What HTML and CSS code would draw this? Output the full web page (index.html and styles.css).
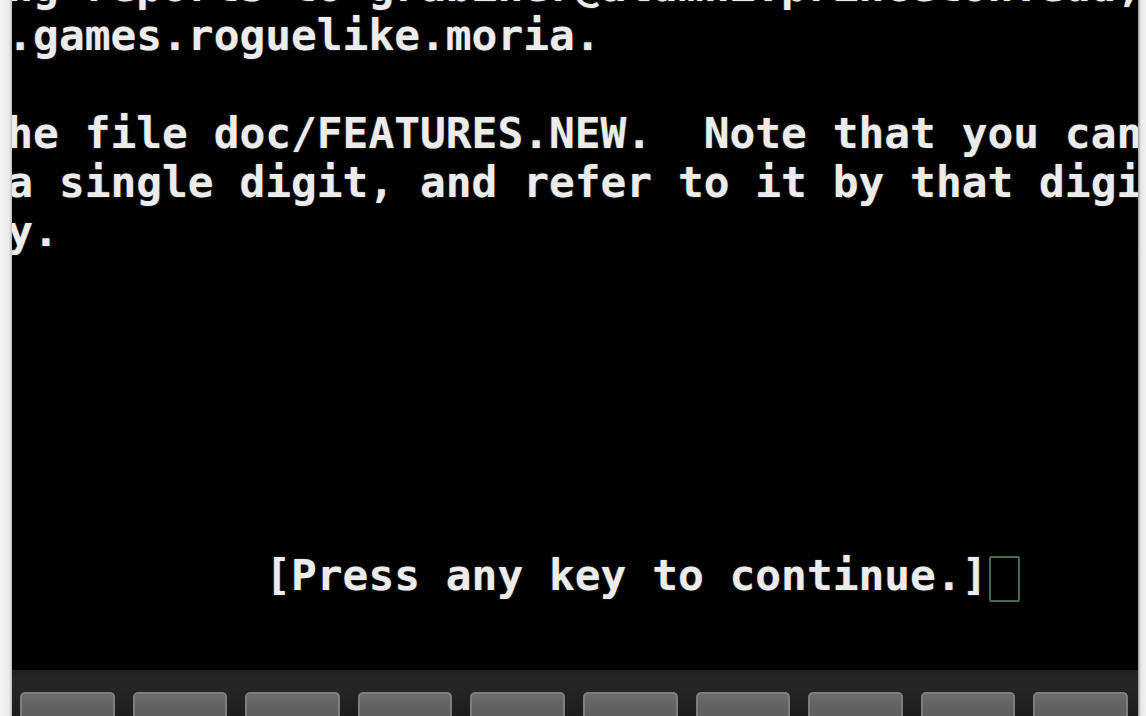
FILE: index.html
```
<!DOCTYPE html>
<html lang="en">
<head>
  <meta charset="UTF-8" />
  <title>Moria</title>
  <link rel="stylesheet" href="styles.css">
</head>
<body>
  <div class="bezel bezel-left"></div>

  <div class="device">
    <div class="terminal">
<pre class="screen">ing reports to grabiner@alumni.princeton.edu, or
c.games.roguelike.moria.

the file doc/FEATURES.NEW.  Note that you can
 a single digit, and refer to it by that digit
ly.






           [Press any key to continue.]<span class="cursor"></span></pre>
    </div>

    <div class="keybar">
      <div class="key"></div>
      <div class="key"></div>
      <div class="key"></div>
      <div class="key"></div>
      <div class="key"></div>
      <div class="key"></div>
      <div class="key"></div>
      <div class="key"></div>
      <div class="key"></div>
      <div class="key"></div>
    </div>
  </div>

  <div class="bezel bezel-right"></div>
</body>
</html>
```

FILE: styles.css
```
* {
  box-sizing: border-box;
  margin: 0;
  padding: 0;
}

html, body {
  height: 100%;
  overflow: hidden;
}

body {
  display: flex;
  background-color: #000;
}

.bezel {
  height: 100%;
}

.bezel-left {
  width: 12px;
  background: linear-gradient(to right, #f4f4f4 0%, #ececec 75%, #bdbdbd 100%);
}

.bezel-right {
  width: 8px;
  background: linear-gradient(to right, #9a9a9a 0%, #e6e6e6 35%, #f2f2f2 100%);
}

.device {
  flex: 1;
  display: flex;
  flex-direction: column;
  min-width: 0;
}

.terminal {
  flex: 1;
  background-color: #000;
  overflow: hidden;
}

.screen {
  margin-top: -38.5px;
  margin-left: -30.5px;
  font-family: "DejaVu Sans Mono", "Liberation Mono", monospace;
  font-weight: bold;
  font-size: 42.85px;
  line-height: 49.1px;
  color: #ececec;
  text-shadow: 0 0 2px rgba(255, 255, 255, 0.35);
  white-space: pre;
}

.cursor {
  display: inline-block;
  width: 31px;
  height: 46px;
  margin-left: 2px;
  vertical-align: -12px;
  border: 2px solid #456c53;
  border-radius: 2px;
}

.keybar {
  height: 46px;
  flex-shrink: 0;
  display: flex;
  gap: 18px;
  padding: 22px 10px 0 8px;
  background: linear-gradient(to bottom, #202020 0%, #262626 30%, #1d1d1d 100%);
  overflow: hidden;
}

.key {
  flex: 1;
  height: 34px;
  background: linear-gradient(to bottom, #6c6c6c 0%, #616161 40%, #5c5c5c 100%);
  border: 2px solid #7e7e7e;
  border-bottom: none;
  border-radius: 5px 5px 0 0;
}
```
